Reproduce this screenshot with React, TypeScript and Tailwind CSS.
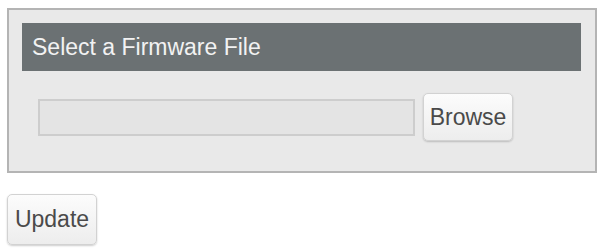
export default function App() {
  return (
    <div className="w-[598px] h-[248px] bg-white pt-[8px] pl-[7px] font-['Liberation_Sans',Arial,sans-serif]">
      {/* Firmware panel */}
      <div className="w-[590px] h-[165px] border-2 border-[#b4b4b4] bg-[#e9e9e9] pt-[13px] pl-[13px] pr-[14px]">
        <div className="h-[48px] bg-[#6b7173] pl-[10px] flex items-center text-[23px] text-[#f2f2f2]">
          Select a Firmware File
        </div>
        <div className="flex items-center mt-[22px] pl-[16px]">
          <input
            type="text"
            readOnly
            className="w-[377px] h-[37px] bg-[#e4e4e4] border-2 border-[#cdcdcd] outline-none"
          />
          <button className="ml-[8px] w-[90px] h-[48px] rounded-[5px] border border-[#d2d2d2] bg-gradient-to-b from-[#fcfcfc] to-[#ededed] shadow-[0_1px_2px_rgba(0,0,0,0.2)] text-[23px] text-[#4a4a4a]">
            Browse
          </button>
        </div>
      </div>

      <button className="mt-[21px] w-[90px] h-[51px] rounded-[5px] border border-[#d2d2d2] bg-gradient-to-b from-[#fcfcfc] to-[#ededed] shadow-[0_1px_2px_rgba(0,0,0,0.2)] text-[23px] text-[#4a4a4a]">
        Update
      </button>
    </div>
  );
}
